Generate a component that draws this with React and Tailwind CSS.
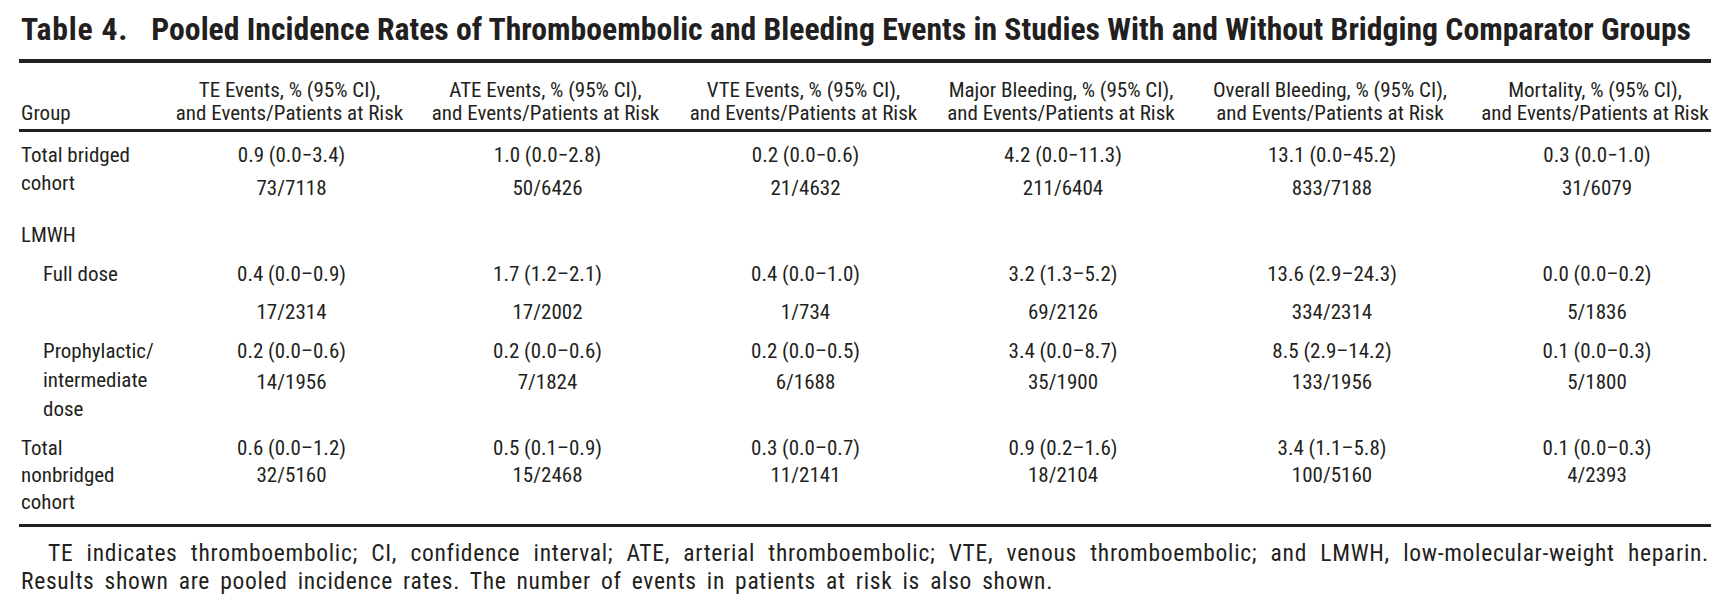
import React from 'react';

const font = "font-['Roboto_Condensed',Roboto,sans-serif] [font-stretch:condensed]";

const cols = 'grid w-[1700px] grid-cols-[143px_255px_257px_259px_256px_282px_248px]';

const headers = [
  'TE Events, % (95% CI),',
  'ATE Events, % (95% CI),',
  'VTE Events, % (95% CI),',
  'Major Bleeding, % (95% CI),',
  'Overall Bleeding, % (95% CI),',
  'Mortality, % (95% CI),',
];

const rows = [
  {
    label: ['Total bridged', 'cohort'],
    indent: false,
    mt: 'mt-[9px]',
    gap: 'gap-[5px]',
    lh: 'leading-[28px]',
    values: [
      ['0.9 (0.0\u22123.4)', '73/7118'],
      ['1.0 (0.0\u22122.8)', '50/6426'],
      ['0.2 (0.0\u22120.6)', '21/4632'],
      ['4.2 (0.0\u221211.3)', '211/6404'],
      ['13.1 (0.0\u221245.2)', '833/7188'],
      ['0.3 (0.0\u22121.0)', '31/6079'],
    ],
  },
  {
    label: ['LMWH'],
    indent: false,
    mt: 'mt-[19px]',
    gap: 'gap-0',
    lh: 'leading-[28px]',
    values: [],
  },
  {
    label: ['Full dose'],
    indent: true,
    mt: 'mt-[11px]',
    gap: 'gap-[10px]',
    lh: 'leading-[28px]',
    values: [
      ['0.4 (0.0\u20130.9)', '17/2314'],
      ['1.7 (1.2\u20132.1)', '17/2002'],
      ['0.4 (0.0\u20131.0)', '1/734'],
      ['3.2 (1.3\u20135.2)', '69/2126'],
      ['13.6 (2.9\u201324.3)', '334/2314'],
      ['0.0 (0.0\u20130.2)', '5/1836'],
    ],
  },
  {
    label: ['Prophylactic/', 'intermediate', 'dose'],
    indent: true,
    mt: 'mt-[11px]',
    gap: 'gap-[2px]',
    lh: 'leading-[29px]',
    values: [
      ['0.2 (0.0\u20130.6)', '14/1956'],
      ['0.2 (0.0\u20130.6)', '7/1824'],
      ['0.2 (0.0\u20130.5)', '6/1688'],
      ['3.4 (0.0\u20138.7)', '35/1900'],
      ['8.5 (2.9\u201314.2)', '133/1956'],
      ['0.1 (0.0\u20130.3)', '5/1800'],
    ],
  },
  {
    label: ['Total', 'nonbridged', 'cohort'],
    indent: false,
    mt: 'mt-[11px]',
    gap: 'gap-0',
    lh: 'leading-[27px]',
    values: [
      ['0.6 (0.0\u20131.2)', '32/5160'],
      ['0.5 (0.1\u20130.9)', '15/2468'],
      ['0.3 (0.0\u20130.7)', '11/2141'],
      ['0.9 (0.2\u20131.6)', '18/2104'],
      ['3.4 (1.1\u20135.8)', '100/5160'],
      ['0.1 (0.0\u20130.3)', '4/2393'],
    ],
  },
];

function BodyRow({ row }) {
  return (
    <div className={`${cols} ${row.mt} ${row.lh}`}>
      <div className={row.indent ? 'pl-[22px]' : ''}>
        {row.label.map((l) => (
          <div key={l} className="whitespace-nowrap">{l}</div>
        ))}
      </div>
      {row.values.map((v, i) => (
        <div key={i} className={`flex flex-col items-center whitespace-nowrap ${row.gap}`}>
          <div>{v[0]}</div>
          <div>{v[1]}</div>
        </div>
      ))}
    </div>
  );
}

export default function App() {
  return (
    <div className={`min-h-[609px] w-[1727px] overflow-hidden bg-white text-[#231f20] ${font}`}>
      <div className="ml-[19px] w-[1692px]">
        <h1 className="pt-[11px] text-[31.7px] leading-[37px] font-bold whitespace-nowrap">
          <span className="pl-[2px] mr-[23px] tracking-[0.8px]">Table 4.</span>
          Pooled Incidence Rates of Thromboembolic and Bleeding Events in Studies With and Without Bridging Comparator Groups
        </h1>
        <div className="mt-[11px] h-[4px] bg-[#231f20]" />

        <div className={`${cols} mt-[16px] text-[21px] leading-[23px]`}>
          <div className="self-end pl-[2px]">Group</div>
          {headers.map((h) => (
            <div key={h} className="text-center whitespace-nowrap">
              <div>{h}</div>
              <div>and Events/Patients at Risk</div>
            </div>
          ))}
        </div>
        <div className="mt-[4px] h-[3px] bg-[#231f20]" />

        <div className="pl-[2px] text-[21px]">
          {rows.map((r) => (
            <BodyRow key={r.label.join(' ')} row={r} />
          ))}
        </div>

        <div className="mt-[8px] h-[3px] bg-[#231f20]" />

        <div className="mt-[12px] text-[23.5px] leading-[28px] tracking-[0.7px] [word-spacing:4px]">
          <p className="pl-[29px] pr-[2px] text-justify [text-align-last:justify]">
            TE indicates thromboembolic; CI, confidence interval; ATE, arterial thromboembolic; VTE, venous thromboembolic; and LMWH, low-molecular-weight heparin.
          </p>
          <p className="pl-[2px]">
            Results shown are pooled incidence rates. The number of events in patients at risk is also shown.
          </p>
        </div>
      </div>
    </div>
  );
}
